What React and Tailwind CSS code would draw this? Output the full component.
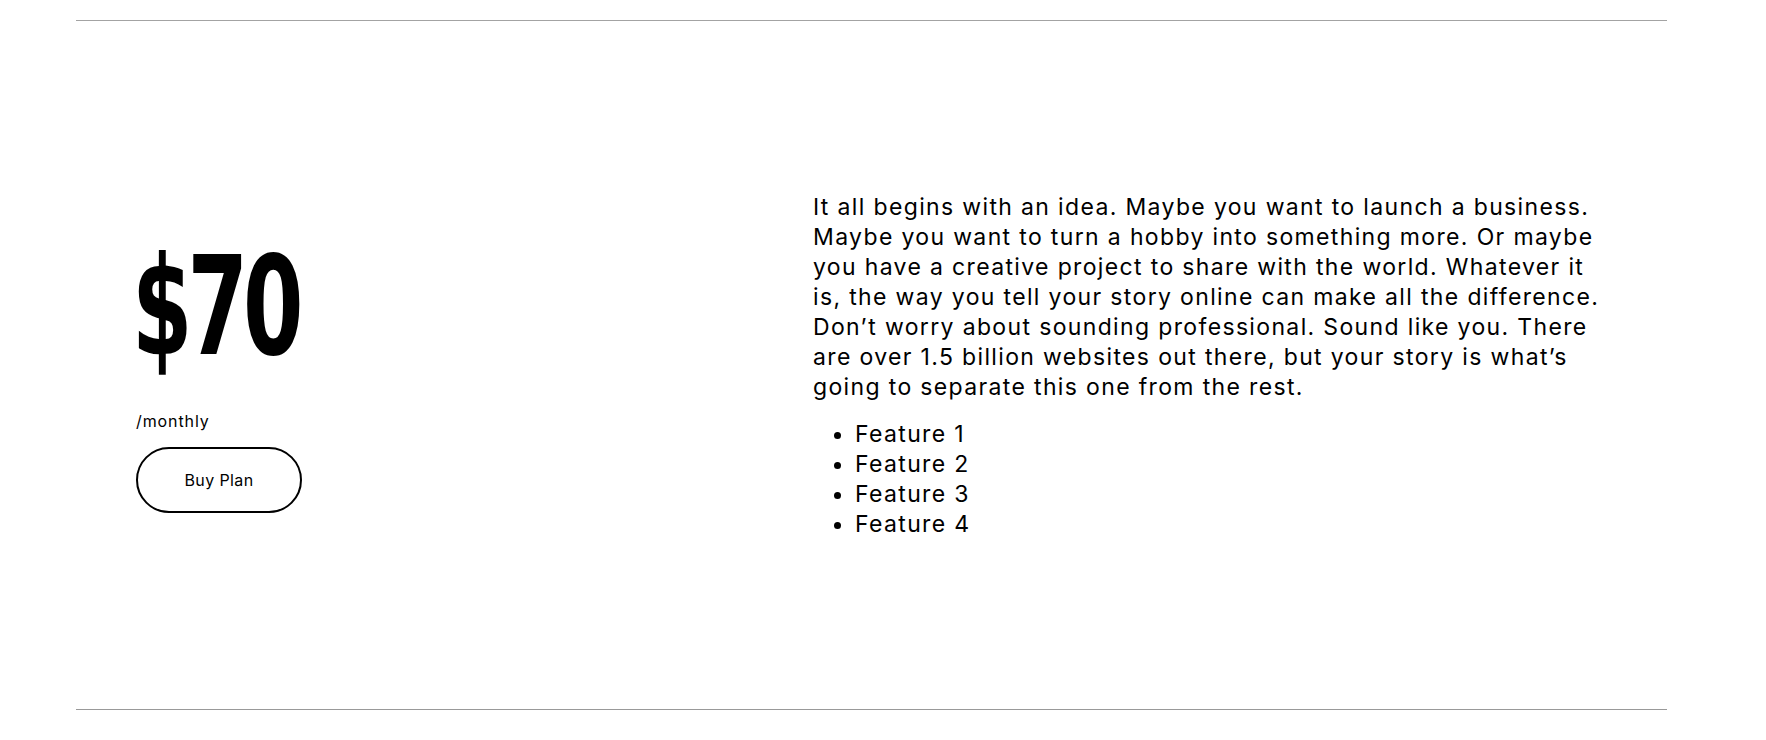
const features = ['Feature 1', 'Feature 2', 'Feature 3', 'Feature 4'];

const App = () => {
    return (
        <div className="min-h-[740px] bg-white pl-[76px] pr-[99px] pt-[20px] text-black" style={{ fontFamily: 'Inter, "Liberation Sans", sans-serif' }}>
            <div className="h-px bg-[#a3a3a3]" />

            {/* Pricing section */}
            <div className="h-[688px] flex items-start pl-[60px]">
                <div className="w-[677px] pt-[217px]">
                    <h2
                        className="inline-block -ml-[4px] origin-left scale-x-[0.705] text-[137px] leading-none font-bold tracking-[-7px]"
                        style={{ fontFamily: '"DejaVu Sans Condensed", "DejaVu Sans", sans-serif' }}
                    >
                        $70
                    </h2>
                    <p className="mt-[34px] text-[16px] leading-6 tracking-[0.9px]">/monthly</p>
                    <button className="mt-[14px] w-[166px] h-[66px] rounded-full border-2 border-black text-[16px] tracking-[0.4px] bg-white">
                        Buy Plan
                    </button>
                </div>

                <div className="w-[820px] pt-[171px] text-[23px] leading-[30px] tracking-[1.35px]">
                    <p className="w-[806px]">
                        It all begins with an idea. Maybe you want to launch a business. Maybe you want to turn a hobby into something more. Or maybe you have a creative project to share with the world. Whatever it is, the way you tell your story online can make all the difference. Don’t worry about sounding professional. Sound like you. There are over 1.5 billion websites out there, but your story is what’s going to separate this one from the rest.
                    </p>
                    <ul className="mt-[17px] list-disc pl-[42px]">
                        {features.map((f) => (
                            <li key={f}>{f}</li>
                        ))}
                    </ul>
                </div>
            </div>

            <div className="h-px bg-[#999999]" />
        </div>
    );
};

export default App;
